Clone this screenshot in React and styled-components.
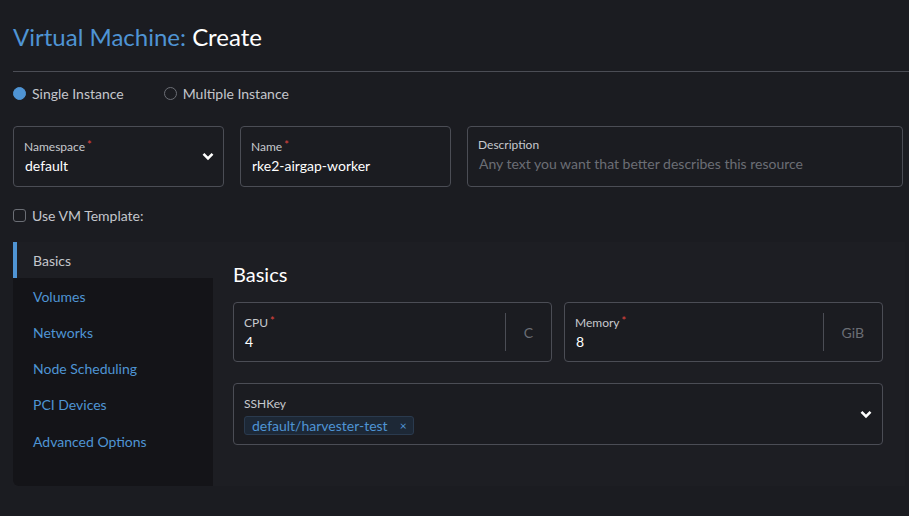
import React from "react";
import styled, { createGlobalStyle } from "styled-components";

const Global = createGlobalStyle`
  html, body { margin: 0; padding: 0; background: #1b1c21; }
  body { font-family: Lato, "Noto Sans", sans-serif; color: #e6e6e6; }
  * { box-sizing: border-box; }
`;

const Page = styled.div`
  padding: 23px 4px 30px 13px;
  width: 909px;
  min-height: 516px;
`;

const Title = styled.h1`
  margin: 0 0 20px;
  font-size: 24px;
  line-height: 28px;
  font-weight: 400;
  color: #ffffff;
  span { color: #4f94d4; }
`;

const Divider = styled.hr`
  margin: 0 -4px 0 0;
  border: 0;
  border-top: 1px solid #4b4d55;
`;

const RadioRow = styled.div`
  display: flex;
  gap: 40px;
  margin-top: 11px;
  height: 20px;
  align-items: center;
`;

const RadioLabel = styled.label`
  display: flex;
  align-items: center;
  gap: 6px;
  font-size: 14px;
  color: #c4c6cc;
`;

const RadioDot = styled.span`
  width: 13px;
  height: 13px;
  border-radius: 50%;
  background: ${(p) => (p.$on ? "#4f94d4" : "transparent")};
  border: 1px solid ${(p) => (p.$on ? "#4f94d4" : "#6b6e75")};
`;

const FieldRow = styled.div`
  display: grid;
  grid-template-columns: 211px 211px 1fr;
  gap: 16px;
  margin-top: 23px;
  padding-right: 2px;
`;

const Box = styled.div`
  display: flex;
  align-items: stretch;
  height: ${(p) => p.$h || 61}px;
  margin-top: ${(p) => p.$mt || 0}px;
  border: 1px solid #4b4d55;
  border-radius: 4px;
  background: #1b1c21;
`;

const BoxMain = styled.div`
  flex: 1;
  display: flex;
  flex-direction: column;
  justify-content: flex-start;
  padding: ${(p) => p.$pt || 10}px 10px 0;
  gap: ${(p) => p.$gap || 3}px;
`;

const Label = styled.div`
  font-size: 12px;
  line-height: 15px;
  color: #c7c9ce;
`;

const Req = styled.span`
  color: #e0443f;
  font-size: 11px;
  margin-left: 2px;
  vertical-align: 2px;
`;

const Value = styled.div`
  font-size: 14px;
  line-height: 18px;
  padding-left: 1px;
  color: ${(p) => (p.$placeholder ? "#6b6e75" : "#ffffff")};
`;

const Chevron = styled.div`
  display: flex;
  align-items: center;
  padding-right: ${(p) => p.$pr || 9}px;
`;

const Unit = styled.div`
  display: flex;
  align-items: center;
  justify-content: center;
  padding: 0 18px;
  margin: 10px 0;
  border-left: 1px solid #4b4d55;
  font-size: 14px;
  color: #6b6e75;
`;

const CheckRow = styled.label`
  display: flex;
  align-items: center;
  gap: 6px;
  margin-top: 18px;
  height: 20px;
  font-size: 14px;
  color: #c4c6cc;
`;

const CheckBox = styled.span`
  width: 13px;
  height: 13px;
  border: 1px solid #6b6e75;
  border-radius: 3px;
`;

const Tabs = styled.div`
  display: flex;
  margin-top: 17px;
  height: 244px;
  width: 892px;
  background: #1d1e23;
  border-radius: 0 0 0 6px;
`;

const Nav = styled.div`
  width: 200px;
  display: flex;
  flex-direction: column;
  background: #141418;
  border-radius: 0 0 0 6px;
`;

const NavItem = styled.div`
  height: 36.2px;
  display: flex;
  align-items: center;
  padding-left: 16px;
  font-size: 14px;
  color: ${(p) => (p.$active ? "#c4c6cc" : "#4f94d4")};
  background: ${(p) => (p.$active ? "#1d1e23" : "transparent")};
  border-left: 4px solid ${(p) => (p.$active ? "#4f94d4" : "transparent")};
`;

const Content = styled.div`
  flex: 1;
  padding: 20px 22px 0 20px;
`;

const SectionTitle = styled.h2`
  margin: 0 0 16px;
  font-size: 20px;
  line-height: 24px;
  font-weight: 400;
  color: #ffffff;
`;

const Pair = styled.div`
  display: grid;
  grid-template-columns: 1fr 1fr;
  gap: 12px;
`;

const Chip = styled.span`
  display: inline-flex;
  align-items: center;
  align-self: flex-start;
  gap: 12px;
  height: 19px;
  padding: 0 6px 0 7px;
  background: #1d2836;
  border: 1px solid #2a3a4e;
  border-radius: 3px;
  font-size: 14px;
  color: #4f94d4;
`;

const ChipX = styled.span`
  font-size: 12px;
`;

const ChevronIcon = () => (
  <svg width="12" height="9" viewBox="0 0 12 9">
    <path d="M1.5 1.8 L6 6.3 L10.5 1.8" fill="none" stroke="#ffffff" strokeWidth="2.6" />
  </svg>
);

export default function App() {
  return (
    <>
      <Global />
      <Page>
        <Title>
          <span>Virtual Machine:</span> Create
        </Title>
        <Divider />
        <RadioRow>
          <RadioLabel>
            <RadioDot $on />
            Single Instance
          </RadioLabel>
          <RadioLabel>
            <RadioDot />
            Multiple Instance
          </RadioLabel>
        </RadioRow>
        <FieldRow>
          <Box>
            <BoxMain>
              <Label>
                Namespace<Req>*</Req>
              </Label>
              <Value>default</Value>
            </BoxMain>
            <Chevron>
              <ChevronIcon />
            </Chevron>
          </Box>
          <Box>
            <BoxMain>
              <Label>
                Name<Req>*</Req>
              </Label>
              <Value>rke2-airgap-worker</Value>
            </BoxMain>
          </Box>
          <Box>
            <BoxMain>
              <Label>Description</Label>
              <Value $placeholder>Any text you want that better describes this resource</Value>
            </BoxMain>
          </Box>
        </FieldRow>
        <CheckRow>
          <CheckBox />
          Use VM Template:
        </CheckRow>
        <Tabs>
          <Nav>
            <NavItem $active>Basics</NavItem>
            <NavItem>Volumes</NavItem>
            <NavItem>Networks</NavItem>
            <NavItem>Node Scheduling</NavItem>
            <NavItem>PCI Devices</NavItem>
            <NavItem>Advanced Options</NavItem>
          </Nav>
          <Content>
            <SectionTitle>Basics</SectionTitle>
            <Pair>
              <Box $h={60}>
                <BoxMain>
                  <Label>
                    CPU<Req>*</Req>
                  </Label>
                  <Value>4</Value>
                </BoxMain>
                <Unit>C</Unit>
              </Box>
              <Box $h={60}>
                <BoxMain>
                  <Label>
                    Memory<Req>*</Req>
                  </Label>
                  <Value>8</Value>
                </BoxMain>
                <Unit>GiB</Unit>
              </Box>
            </Pair>
            <Box $h={62} $mt={21}>
              <BoxMain $pt={12} $gap={5}>
                <Label>SSHKey</Label>
                <Chip>
                  default/harvester-test<ChipX>×</ChipX>
                </Chip>
              </BoxMain>
              <Chevron $pr={10}>
                <ChevronIcon />
              </Chevron>
            </Box>
          </Content>
        </Tabs>
      </Page>
    </>
  );
}
